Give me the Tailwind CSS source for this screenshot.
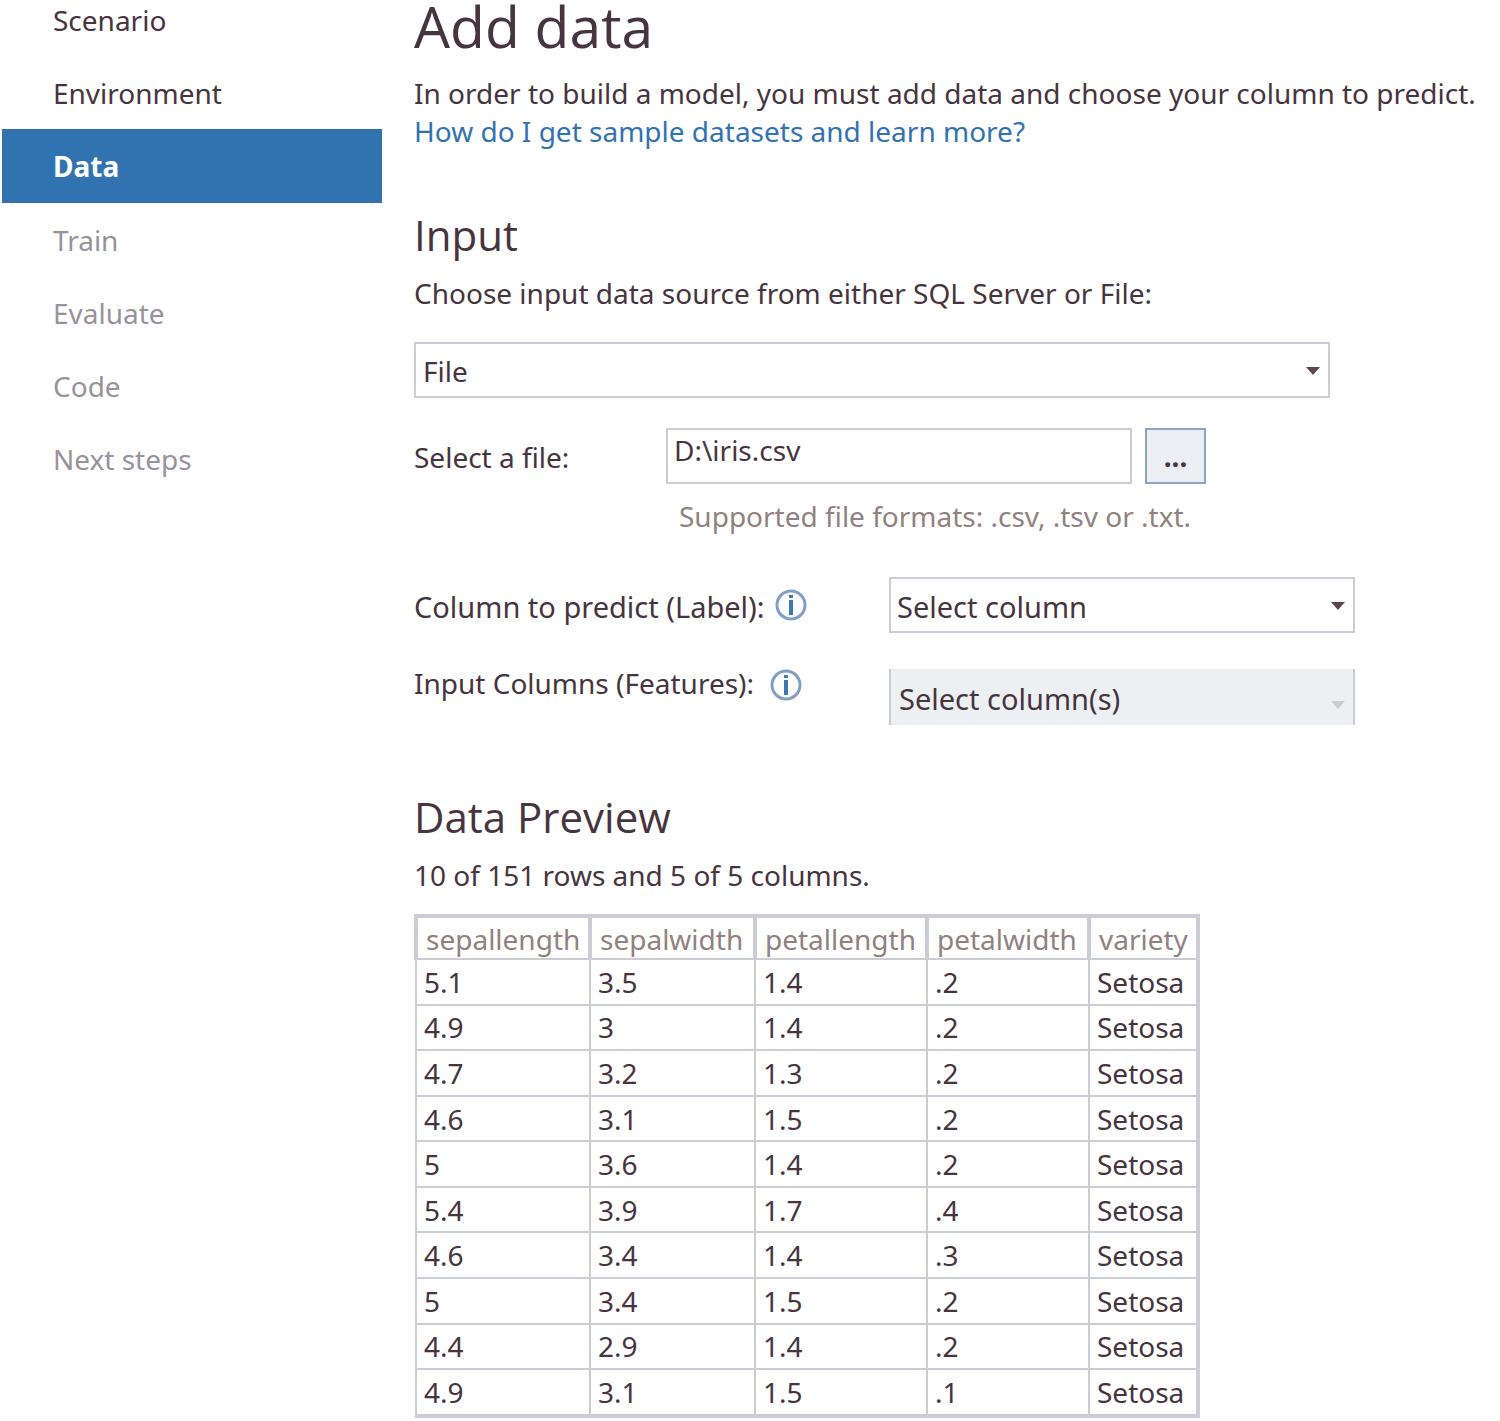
<!DOCTYPE html>
<html lang="en">
<head>
<meta charset="utf-8">
<meta name="viewport" content="width=device-width, initial-scale=1">
<title>Add data</title>
<script src="https://cdn.jsdelivr.net/npm/@tailwindcss/browser@4"></script>
</head>
<body class="bg-white font-['Noto_Sans','Open_Sans',sans-serif] text-[28px] leading-[38px] text-[#47343f]">
<div class="flex gap-8 pl-[2px]">
  <nav aria-label="Steps" class="-mt-[17px] flex w-[380px] shrink-0 flex-col text-[#97929b]">
    <a href="#scenario" class="flex h-[73px] items-center pl-[51px] text-[#47343f]">Scenario</a>
    <a href="#environment" class="flex h-[73px] items-center pl-[51px] text-[#47343f]">Environment</a>
    <a href="#data" aria-current="step" class="flex h-[74px] items-center bg-[#3173b1] pl-[51px] font-bold text-white">Data</a>
    <a href="#train" class="flex h-[73px] items-center pl-[51px]">Train</a>
    <a href="#evaluate" class="flex h-[73px] items-center pl-[51px]">Evaluate</a>
    <a href="#code" class="flex h-[73px] items-center pl-[51px]">Code</a>
    <a href="#next" class="flex h-[73px] items-center pl-[51px]">Next steps</a>
  </nav>

  <main class="min-w-0 flex-1">
    <h1 class="font-['Open_Sans',sans-serif] text-[57px] leading-[52px]">Add data</h1>
    <p class="mt-[22px]">In order to build a model, you must add data and choose your column to predict.</p>
    <a href="#samples" class="block text-[#3173b1]">How do I get sample datasets and learn more?</a>

    <section>
      <h2 class="mt-[58px] font-['Open_Sans',sans-serif] text-[42px] leading-[54px]">Input</h2>
      <label for="source" class="mt-3 block">Choose input data source from either SQL Server or File:</label>
      <div class="relative mt-[30px] max-w-[916px]">
        <select id="source" class="block h-14 w-full appearance-none border-2 border-[#cbccd6] bg-white px-[7px] pt-[2px]">
          <option>File</option>
        </select>
        <svg class="pointer-events-none absolute top-[25px] right-[10px] h-2 w-[14px]" viewBox="0 0 14 8" fill="#5e4650"><path d="M0 0h14L7 8z"/></svg>
      </div>

      <div class="mt-[30px] flex items-center">
        <label for="file" class="w-[252px] shrink-0 pt-[2px]">Select a file:</label>
        <input id="file" type="text" value="D:\iris.csv" class="h-14 w-[466px] border-2 border-[#cbccd6] bg-white px-[6px] pb-3">
        <button type="button" aria-label="Browse" class="ml-[13px] flex h-14 w-[61px] items-center justify-center border-2 border-[#8fa3c3] bg-[#ebeff3] font-bold">...</button>
      </div>
      <p class="mt-[13px] pl-[265px] text-[#91817f]">Supported file formats: .csv, .tsv or .txt.</p>

      <div class="mt-[42px] flex items-center">
        <div class="flex w-[475px] shrink-0 items-center gap-[10px]">
          <label for="label" class="pt-1 text-[29px]">Column to predict (Label):</label>
          <svg class="size-8" viewBox="0 0 32 32" role="img" aria-label="About the label column"><circle cx="16" cy="16" r="14" fill="none" stroke="#7f9fc6" stroke-width="3"/><path d="M14 6h4v3h-4zM14 11h4v15h-4z" fill="#3b78b3"/></svg>
        </div>
        <div class="relative w-[466px]">
          <select id="label" class="block h-14 w-full appearance-none border-2 border-[#cbccd6] bg-white px-[6px] pt-1 text-[29px]">
            <option>Select column</option>
          </select>
          <svg class="pointer-events-none absolute top-[25px] right-[10px] h-2 w-[14px]" viewBox="0 0 14 8" fill="#5e4650"><path d="M0 0h14L7 8z"/></svg>
        </div>
      </div>

      <div class="mt-9 flex items-start">
        <div class="flex w-[475px] shrink-0 items-center gap-4 leading-7">
          <label for="features" class="pb-1">Input Columns (Features):</label>
          <svg class="size-8" viewBox="0 0 32 32" role="img" aria-label="About the input columns"><circle cx="16" cy="16" r="14" fill="none" stroke="#7f9fc6" stroke-width="3"/><path d="M14 6h4v3h-4zM14 11h4v15h-4z" fill="#3b78b3"/></svg>
        </div>
        <div class="relative w-[466px]">
          <select id="features" disabled class="block h-14 w-full appearance-none border-x-2 border-[#cbccd6] bg-[#edf0f3] px-2 pt-1 text-[29px] text-[#47343f] opacity-100">
            <option>Select column(s)</option>
          </select>
          <svg class="pointer-events-none absolute top-8 right-[10px] h-2 w-[14px]" viewBox="0 0 14 8" fill="#cbccd6"><path d="M0 0h14L7 8z"/></svg>
        </div>
      </div>
    </section>

    <section>
      <h2 class="mt-[65px] font-['Open_Sans',sans-serif] text-[42px] leading-[54px]">Data Preview</h2>
      <p class="mt-3">10 of 151 rows and 5 of 5 columns.</p>
      <table class="mt-5 h-[504px] w-[786px] table-fixed border-collapse border-4 border-l-2 border-[#cbccd6] text-left leading-[38px] [&_td]:border-2 [&_td]:border-[#cbccd6] [&_td]:px-[7px] [&_td]:py-0 [&_th]:border-x-4 [&_th]:border-b-2 [&_th]:border-[#cbccd6] [&_th]:px-2 [&_th]:pt-[2px] [&_th]:leading-[38px] [&_th]:font-normal">
        <colgroup><col class="w-[174px]"><col class="w-[165px]"><col class="w-[172px]"><col class="w-[162px]"><col class="w-[109px]"></colgroup>
        <thead class="text-[#91817f]">
          <tr class="h-[43px]"><th scope="col">sepallength</th><th scope="col">sepalwidth</th><th scope="col">petallength</th><th scope="col">petalwidth</th><th scope="col">variety</th></tr>
        </thead>
        <tbody>
          <tr><td>5.1</td><td>3.5</td><td>1.4</td><td>.2</td><td>Setosa</td></tr>
          <tr><td>4.9</td><td>3</td><td>1.4</td><td>.2</td><td>Setosa</td></tr>
          <tr><td>4.7</td><td>3.2</td><td>1.3</td><td>.2</td><td>Setosa</td></tr>
          <tr><td>4.6</td><td>3.1</td><td>1.5</td><td>.2</td><td>Setosa</td></tr>
          <tr><td>5</td><td>3.6</td><td>1.4</td><td>.2</td><td>Setosa</td></tr>
          <tr><td>5.4</td><td>3.9</td><td>1.7</td><td>.4</td><td>Setosa</td></tr>
          <tr><td>4.6</td><td>3.4</td><td>1.4</td><td>.3</td><td>Setosa</td></tr>
          <tr><td>5</td><td>3.4</td><td>1.5</td><td>.2</td><td>Setosa</td></tr>
          <tr><td>4.4</td><td>2.9</td><td>1.4</td><td>.2</td><td>Setosa</td></tr>
          <tr><td>4.9</td><td>3.1</td><td>1.5</td><td>.1</td><td>Setosa</td></tr>
        </tbody>
      </table>
    </section>
  </main>
</div>
</body>
</html>
